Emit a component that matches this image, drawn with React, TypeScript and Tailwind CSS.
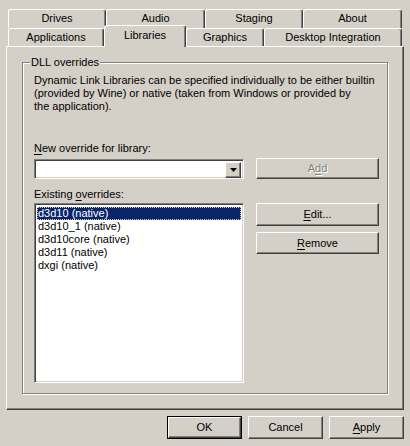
const raised =
  'border border-t-white border-l-white border-r-[#404040] border-b-[#404040] shadow-[inset_-1px_-1px_0_#808080]';
const sunken =
  'border border-t-[#808080] border-l-[#808080] border-r-white border-b-white shadow-[inset_1px_1px_0_#404040,inset_-1px_-1px_0_#d4d0c8]';
const tabBase =
  'flex items-center justify-center border-t border-l border-r border-t-white border-l-white border-r-[#404040] shadow-[inset_-1px_0_0_#808080] rounded-t-[3px] bg-[#d4d0c8]';

function Key({ children }: { children: string }) {
  return <span className="underline underline-offset-[2px]">{children}</span>;
}

function Button({
  children,
  className = '',
  disabled = false,
}: {
  children: React.ReactNode;
  className?: string;
  disabled?: boolean;
}) {
  return (
    <div
      className={`flex items-center justify-center ${raised} ${
        disabled ? 'text-[#808080] [text-shadow:1px_1px_0_#fff]' : 'text-black'
      } ${className}`}
    >
      {children}
    </div>
  );
}

const overrides = ['d3d10 (native)', 'd3d10_1 (native)', 'd3d10core (native)', 'd3d11 (native)', 'dxgi (native)'];

export default function App() {
  return (
    <div className="w-[410px] h-[446px] bg-[#d4d0c8] text-black text-[11px] leading-[13px] font-['Liberation_Sans',Arial,sans-serif] overflow-hidden select-none">
      <div className="pt-[9px] pl-[8px]">
        <div className="flex h-[19px]">
          <div className={`${tabBase} w-[98px] pb-[2px]`}>Drives</div>
          <div className={`${tabBase} w-[99px] pb-[2px]`}>Audio</div>
          <div className={`${tabBase} w-[98px] pb-[2px]`}>Staging</div>
          <div className={`${tabBase} w-[99px] pb-[2px]`}>About</div>
        </div>
        <div className="flex items-start h-[18px]">
          <div className={`${tabBase} w-[96px] h-[18px]`}>Applications</div>
          <div className={`${tabBase} relative z-10 w-[82px] h-[22px] -mt-[3px] pb-[3px]`}>Libraries</div>
          <div className={`${tabBase} w-[78px] h-[18px]`}>Graphics</div>
          <div className={`${tabBase} w-[138px] h-[18px]`}>Desktop Integration</div>
        </div>
      </div>

      <div className={`ml-[6px] w-[398px] h-[364px] pt-[15px] pl-[15px] ${raised}`}>
        <div className="relative w-[366px] h-[332px] border border-[#808080] shadow-[1px_1px_0_#fff,inset_1px_1px_0_#fff] pt-[11px] pl-[11px]">
          <div className="absolute left-[7px] -top-[7px] bg-[#d4d0c8] px-[1px]">DLL overrides</div>

          <p>
            Dynamic Link Libraries can be specified individually to be either builtin
            <br />
            (provided by Wine) or native (taken from Windows or provided by
            <br />
            the application).
          </p>

          <div className="mt-[29px]">
            <Key>N</Key>ew override for library:
          </div>

          <div className="flex items-start mt-[3px]">
            <div className={`w-[210px] h-[20px] mt-[1px] bg-white flex justify-end p-[2px] ${sunken}`}>
              <div className={`w-[16px] h-[16px] bg-[#d4d0c8] flex items-center justify-center ${raised}`}>
                <svg width="7" height="4" viewBox="0 0 7 4">
                  <path d="M0 0h7L3.5 4z" fill="#000" />
                </svg>
              </div>
            </div>
            <Button disabled className="ml-[12px] w-[123px] h-[21px]">
              A<span className="underline underline-offset-[2px]">d</span>d
            </Button>
          </div>

          <div className="mt-[9px]">
            Existing <Key>o</Key>verrides:
          </div>

          <div className="flex items-start mt-[2px]">
            <div className={`w-[210px] h-[180px] bg-white p-[2px] pt-[3px] ${sunken}`}>
              {overrides.map((item, i) => (
                <div
                  key={item}
                  className={`h-[13px] leading-[13px] pl-[1px] ${
                    i === 0
                      ? 'bg-[#0a246a] text-white outline outline-1 outline-dotted outline-[#d4d0c8] -outline-offset-1'
                      : ''
                  }`}
                >
                  {item}
                </div>
              ))}
            </div>
            <div className="ml-[12px] flex flex-col gap-[6px]">
              <Button className="w-[123px] h-[23px]">
                <Key>E</Key>dit...
              </Button>
              <Button className="w-[123px] h-[22px]">
                <Key>R</Key>emove
              </Button>
            </div>
          </div>
        </div>
      </div>

      <div className="flex justify-end gap-[6px] pr-[6px] mt-[6px]">
        <div className="w-[75px] h-[23px] border border-black">
          <Button className="w-full h-full">OK</Button>
        </div>
        <Button className="w-[75px] h-[23px]">Cancel</Button>
        <Button className="w-[75px] h-[23px]">
          <Key>A</Key>pply
        </Button>
      </div>
    </div>
  );
}
